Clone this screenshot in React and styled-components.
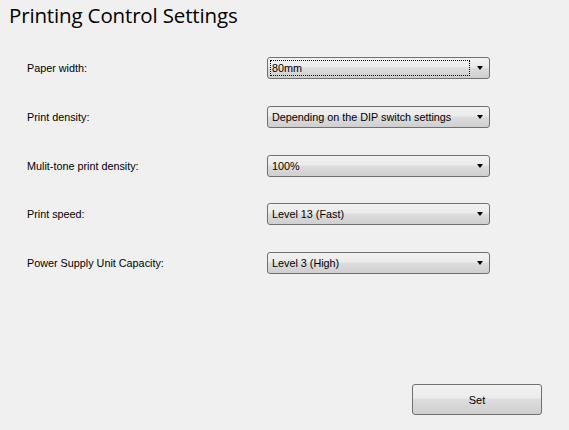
import React from "react";
import styled, { createGlobalStyle } from "styled-components";

const Global = createGlobalStyle`
  html, body { margin: 0; padding: 0; background: #f0f0f0; }
  body { width: 569px; height: 430px; overflow: hidden; }
`;

const Page = styled.div`
  width: 569px;
  height: 430px;
  box-sizing: border-box;
  background: #f0f0f0;
  display: flex;
  flex-direction: column;
  font-family: "Liberation Sans", Arial, sans-serif;
  color: #000;
`;

const Title = styled.h1`
  margin: 0;
  padding: 1px 0 0 9px;
  height: 34px;
  box-sizing: border-box;
  font-family: "Open Sans", "Noto Sans", sans-serif;
  font-weight: 400;
  font-size: 20.5px;
  line-height: 28px;
  letter-spacing: -0.15px;
`;

const Form = styled.div`
  display: flex;
  flex-direction: column;
  gap: 26.75px;
  padding: 23px 0 0 27px;
`;

const Row = styled.div`
  display: grid;
  grid-template-columns: 240px 223px;
  align-items: center;
  height: 22px;
`;

const Label = styled.div`
  font-size: 10.8px;
`;

const Combo = styled.div`
  height: 22px;
  box-sizing: border-box;
  border: 1px solid #707070;
  border-radius: 3px;
  background: linear-gradient(#f2f2f2 0%, #ebebeb 45%, #dddddd 50%, #cfcfcf 100%);
  display: flex;
  align-items: center;
  padding: 0 6px 0 2px;
  font-size: 10.8px;
`;

const Value = styled.div`
  flex: 1;
  height: 16px;
  line-height: 16px;
  padding-left: 1px;
  margin-right: 7px;
  box-sizing: border-box;
  border: 1px dotted ${(p) => (p.$focused ? "#000" : "transparent")};
  display: flex;
  align-items: center;
`;

const Arrow = styled.div`
  width: 0;
  height: 0;
  border-left: 3.5px solid transparent;
  border-right: 3.5px solid transparent;
  border-top: 4px solid #000;
`;

const Footer = styled.div`
  margin-top: auto;
  display: flex;
  justify-content: flex-end;
  padding: 0 27px 15px 0;
`;

const Button = styled.button`
  width: 130px;
  height: 31px;
  border: 1px solid #707070;
  border-radius: 3px;
  background: linear-gradient(#f2f2f2 0%, #ebebeb 45%, #dddddd 50%, #cfcfcf 100%);
  font-family: "Liberation Sans", Arial, sans-serif;
  font-size: 11px;
  color: #000;
  padding: 0;
`;

const rows = [
  { label: "Paper width:", value: "80mm", focused: true },
  { label: "Print density:", value: "Depending on the DIP switch settings" },
  { label: "Mulit-tone print density:", value: "100%" },
  { label: "Print speed:", value: "Level 13 (Fast)" },
  { label: "Power Supply Unit Capacity:", value: "Level 3 (High)" },
];

export default function App() {
  return (
    <Page>
      <Global />
      <Title>Printing Control Settings</Title>
      <Form>
        {rows.map((r) => (
          <Row key={r.label}>
            <Label>{r.label}</Label>
            <Combo>
              <Value $focused={r.focused}>{r.value}</Value>
              <Arrow />
            </Combo>
          </Row>
        ))}
      </Form>
      <Footer>
        <Button>Set</Button>
      </Footer>
    </Page>
  );
}
